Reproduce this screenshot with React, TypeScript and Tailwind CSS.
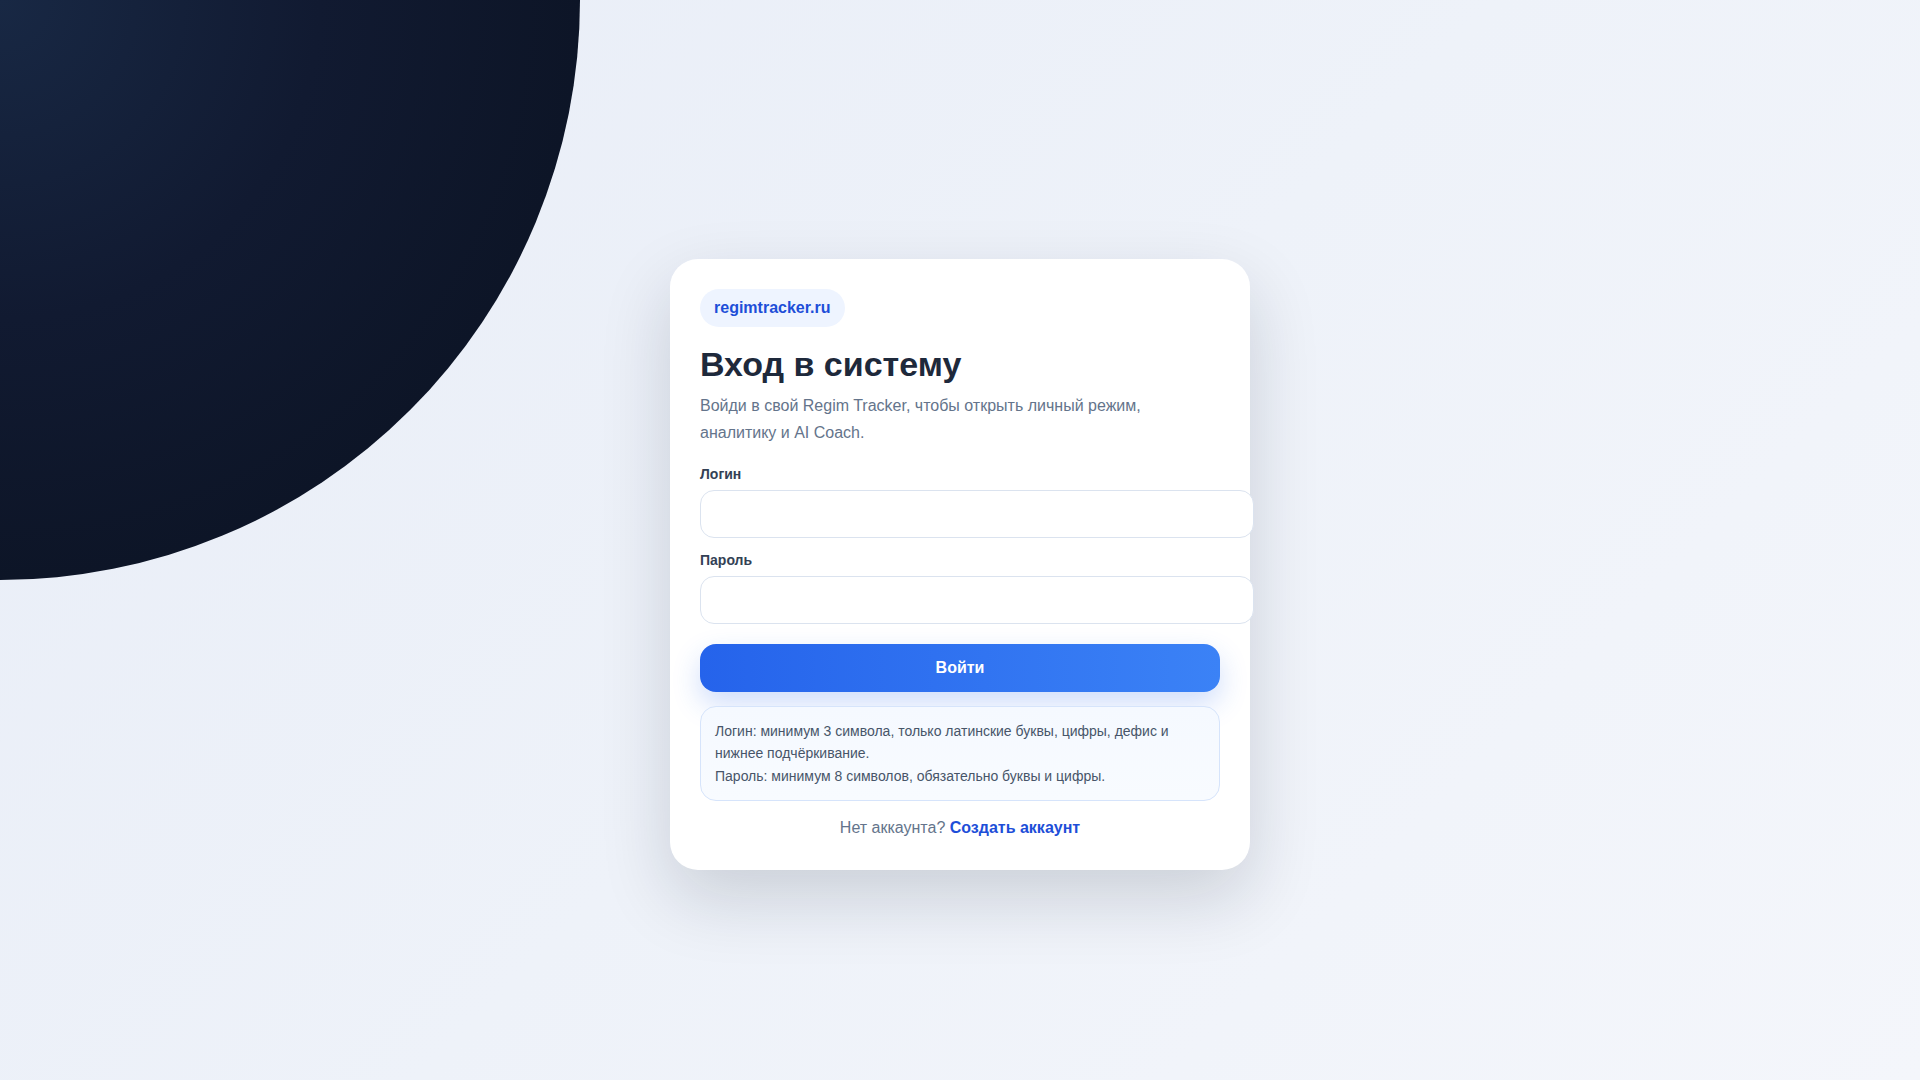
import React from "react";

export default function App() {
  return (
    <div
      className="relative min-h-screen w-full overflow-hidden bg-[linear-gradient(135deg,#e8edf7_0%,#eef2f9_50%,#f4f6fb_100%)]"
      style={{ fontFamily: '"Liberation Sans", Arial, sans-serif' }}
    >
      <div className="pointer-events-none absolute -left-[580px] -top-[580px] h-[1160px] w-[1160px] rounded-full bg-[radial-gradient(circle_closest-side,#182844_0%,#111a31_55%,#0d1527_100%)]" />
      <div className="relative flex min-h-screen items-center justify-center pt-[49px]">
        <div className="w-[580px] rounded-[28px] bg-white p-[30px] shadow-[0_28px_70px_rgba(15,23,42,0.16)]">
          <div className="inline-flex h-[38px] items-center rounded-full bg-[#eef4ff] px-[14px] pt-[1px] text-[16px] font-bold text-[#1d4ed8]">
            regimtracker.ru
          </div>
          <h1 className="mt-[17px] text-[34px] font-bold leading-[41px] text-[#1e293b]">
            Вход в систему
          </h1>
          <p className="mt-[7px] text-[16px] leading-[27px] text-[#64748b]">
            Войди в свой Regim Tracker, чтобы открыть личный режим,
            <br />
            аналитику и AI Coach.
          </p>
          <div className="mt-[18px] flex flex-col gap-[6px]">
            <label className="text-[14px] font-bold leading-[20px] text-[#334155]">Логин</label>
            <input
              type="text"
              className="box-content block h-[46px] w-full rounded-[14px] border border-[#dbe3ef] bg-white px-4 text-[16px] text-[#1e293b] outline-none"
            />
          </div>
          <div className="mt-[12px] flex flex-col gap-[6px]">
            <label className="text-[14px] font-bold leading-[20px] text-[#334155]">Пароль</label>
            <input
              type="password"
              className="box-content block h-[46px] w-full rounded-[14px] border border-[#dbe3ef] bg-white px-4 text-[16px] text-[#1e293b] outline-none"
            />
          </div>
          <button className="mt-[20px] flex h-[48px] w-full items-center justify-center rounded-[16px] bg-[linear-gradient(90deg,#2563eb_0%,#3b82f6_100%)] text-[16px] font-bold text-white shadow-[0_12px_28px_rgba(37,99,235,0.22)]">
            Войти
          </button>
          <div className="mt-[14px] rounded-[16px] border border-[#d6e4fb] bg-[linear-gradient(180deg,#f5f9ff_0%,#f8fbff_100%)] px-[14px] pb-[13px] pt-[13px] text-[14px] leading-[22.5px] text-[#475569]">
            <div>
              Логин: минимум 3 символа, только латинские буквы, цифры, дефис и
              <br />
              нижнее подчёркивание.
            </div>
            <div>Пароль: минимум 8 символов, обязательно буквы и цифры.</div>
          </div>
          <div className="mt-[15px] text-center text-[16px] leading-[24px] text-[#64748b]">
            Нет аккаунта? <a className="font-bold text-[#1d4ed8]">Создать аккаунт</a>
          </div>
        </div>
      </div>
    </div>
  );
}
